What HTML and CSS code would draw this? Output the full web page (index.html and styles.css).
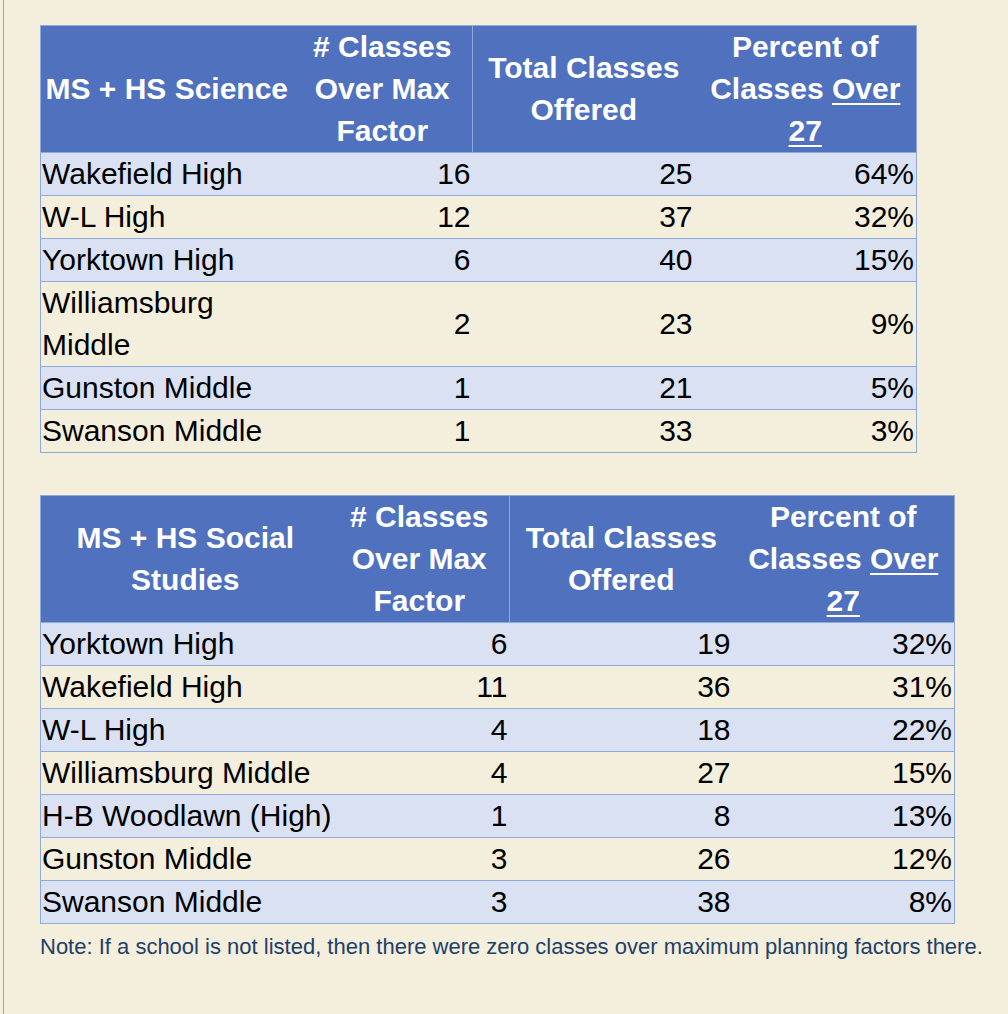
FILE: index.html
```html
<!DOCTYPE html>
<html lang="en">
<head>
<meta charset="utf-8">
<title>Classes Over Max Factor</title>
<link rel="stylesheet" href="styles.css">
</head>
<body>
<div class="page">
  <table class="grid sci">
    <colgroup>
      <col class="c-name">
      <col class="c-over">
      <col class="c-total">
      <col class="c-pct">
    </colgroup>
    <thead>
      <tr>
        <th>MS + HS Science</th>
        <th class="sep"># Classes<br>Over Max<br>Factor</th>
        <th>Total Classes<br>Offered</th>
        <th>Percent of<br>Classes <u>Over</u><br><u>27</u></th>
      </tr>
    </thead>
    <tbody>
      <tr class="alt"><td>Wakefield High</td><td class="num">16</td><td class="num">25</td><td class="num">64%</td></tr>
      <tr><td>W-L High</td><td class="num">12</td><td class="num">37</td><td class="num">32%</td></tr>
      <tr class="alt"><td>Yorktown High</td><td class="num">6</td><td class="num">40</td><td class="num">15%</td></tr>
      <tr><td>Williamsburg Middle</td><td class="num">2</td><td class="num">23</td><td class="num">9%</td></tr>
      <tr class="alt"><td>Gunston Middle</td><td class="num">1</td><td class="num">21</td><td class="num">5%</td></tr>
      <tr><td>Swanson Middle</td><td class="num">1</td><td class="num">33</td><td class="num">3%</td></tr>
    </tbody>
  </table>

  <table class="grid soc">
    <colgroup>
      <col class="c-name2">
      <col class="c-over">
      <col class="c-total2">
      <col class="c-pct">
    </colgroup>
    <thead>
      <tr>
        <th>MS + HS Social<br>Studies</th>
        <th class="sep"># Classes<br>Over Max<br>Factor</th>
        <th>Total Classes<br>Offered</th>
        <th>Percent of<br>Classes <u>Over</u><br><u>27</u></th>
      </tr>
    </thead>
    <tbody>
      <tr class="alt"><td class="nw">Yorktown High</td><td class="num">6</td><td class="num">19</td><td class="num">32%</td></tr>
      <tr><td class="nw">Wakefield High</td><td class="num">11</td><td class="num">36</td><td class="num">31%</td></tr>
      <tr class="alt"><td class="nw">W-L High</td><td class="num">4</td><td class="num">18</td><td class="num">22%</td></tr>
      <tr><td class="nw">Williamsburg Middle</td><td class="num">4</td><td class="num">27</td><td class="num">15%</td></tr>
      <tr class="alt"><td class="nw">H-B Woodlawn (High)</td><td class="num">1</td><td class="num">8</td><td class="num">13%</td></tr>
      <tr><td class="nw">Gunston Middle</td><td class="num">3</td><td class="num">26</td><td class="num">12%</td></tr>
      <tr class="alt"><td class="nw">Swanson Middle</td><td class="num">3</td><td class="num">38</td><td class="num">8%</td></tr>
    </tbody>
  </table>

  <p class="note">Note: If a school is not listed, then there were zero classes over maximum planning factors there.</p>
</div>
</body>
</html>
```

FILE: styles.css
```css
html, body {
  margin: 0;
  padding: 0;
  background: #f4eedc;
}

.page {
  margin-left: 3px;
  border-left: 1px solid #aaa28c;
  min-height: 1014px;
  box-sizing: border-box;
  padding: 25px 0 0 36px;
  font-family: "Liberation Sans", Arial, Helvetica, sans-serif;
}

.grid {
  border-collapse: collapse;
  table-layout: fixed;
  border: 1px solid #8eaadb;
  font-size: 30px;
  line-height: 42px;
  color: #000;
}

.sci { width: 877px; margin-bottom: 42px; }
.soc { width: 915px; }

.c-name { width: 252px; }
.c-name2 { width: 289px; }
.c-over { width: 180px; }
.c-total { width: 222px; }
.c-total2 { width: 223px; }
.c-pct { width: 222px; }

.grid th {
  background: #4f71be;
  color: #fff;
  font-weight: bold;
  text-align: center;
  vertical-align: middle;
  padding: 0;
  border: none;
}

.grid th.sep {
  border-right: 1px solid #8eaadb;
}

.grid th u {
  text-decoration-thickness: 2px;
  text-underline-offset: 4px;
}

.grid td {
  padding: 0 2px 0 1px;
  border-top: 1px solid #8eaadb;
  vertical-align: middle;
  text-align: left;
}

.grid tr.alt td {
  background: #d9e1f2;
}

.grid td.num {
  text-align: right;
}

.grid td.nw {
  white-space: nowrap;
}

.note {
  margin: 10px 0 0;
  font-size: 22px;
  line-height: 26px;
  color: #213f68;
}
```
